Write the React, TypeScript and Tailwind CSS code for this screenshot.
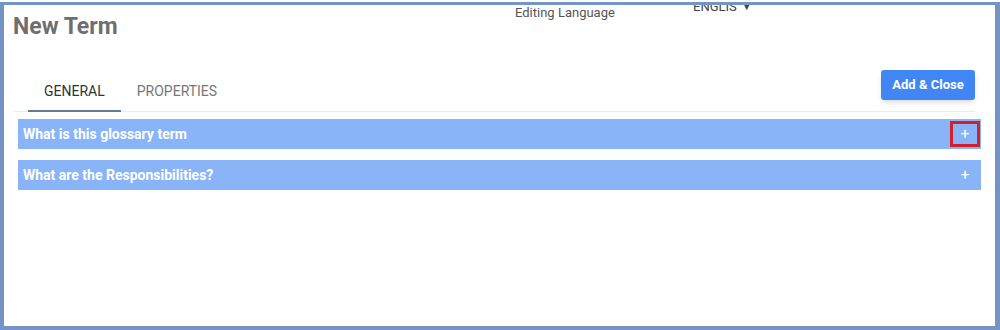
import React, { useState } from 'react'

// ── Helper components ─────────────────────────────────────────────────────────

function Tab({ label, active, onClick }: { label: string; active?: boolean; onClick: () => void }) {
  return (
    <button
      onClick={onClick}
      className={`h-[40px] px-[16px] text-[14px] -mb-px border-b-2 ${
        active ? 'text-[#333] border-[#5e7c93]' : 'text-[#777] border-transparent'
      }`}
    >
      {label}
    </button>
  )
}

function Section({ title, highlight }: { title: string; highlight?: boolean }) {
  return (
    <div className="flex items-center h-[30px] bg-[#8ab4f8] pl-[5px] pr-[1px]">
      <p className="flex-1 text-[14px] font-bold text-white truncate">{title}</p>
      <span
        className={`flex items-center justify-center w-[30px] h-[26px] text-white text-[15px] leading-none ${
          highlight ? 'border-[3px] border-[#d3202e]' : ''
        }`}
      >
        +
      </span>
    </div>
  )
}

// ── Main Page ─────────────────────────────────────────────────────────────────

export default function App() {
  const [tab, setTab] = useState('general')

  return (
    <div className="w-[1000px] h-[330px] bg-white pt-[2px] overflow-hidden" style={{ fontFamily: 'Roboto, "Liberation Sans", sans-serif' }}>
      <div className="h-[328px] border-l-4 border-t-[3px] border-r-[5px] border-b-4 border-[#7394c4] flex flex-col overflow-hidden">
        {/* header */}
        <div className="flex items-start h-[65px] pl-[9px]">
          <h1 className="w-[502px] mt-[5px] text-[23px] font-bold text-[#6e6e6e]">New Term</h1>
          <span className="w-[178px] -mt-[2px] text-[13px] text-[#555]">Editing Language</span>
          <span className="-mt-[6px] text-[13px] leading-[16px] text-[#444] flex items-center gap-[5px]">
            ENGLIS <span className="text-[10px]">▼</span>
          </span>
        </div>

        {/* tabs */}
        <div className="flex items-start ml-[9px] mr-[20px] border-b border-[#ececec]">
          <div className="flex mt-[2px] pl-[15px]">
            <Tab label="GENERAL" active={tab === 'general'} onClick={() => setTab('general')} />
            <Tab label="PROPERTIES" active={tab === 'properties'} onClick={() => setTab('properties')} />
          </div>
          <button className="ml-auto h-[30px] w-[94px] rounded-[3px] bg-[#4285f4] text-white text-[13px] font-bold shadow-md">
            Add &amp; Close
          </button>
        </div>

        {/* sections */}
        <div className="mx-[14px] mt-[7px] flex flex-col gap-[11px]">
          <Section title="What is this glossary term" highlight />
          <Section title="What are the Responsibilities?" />
        </div>
      </div>
    </div>
  )
}
